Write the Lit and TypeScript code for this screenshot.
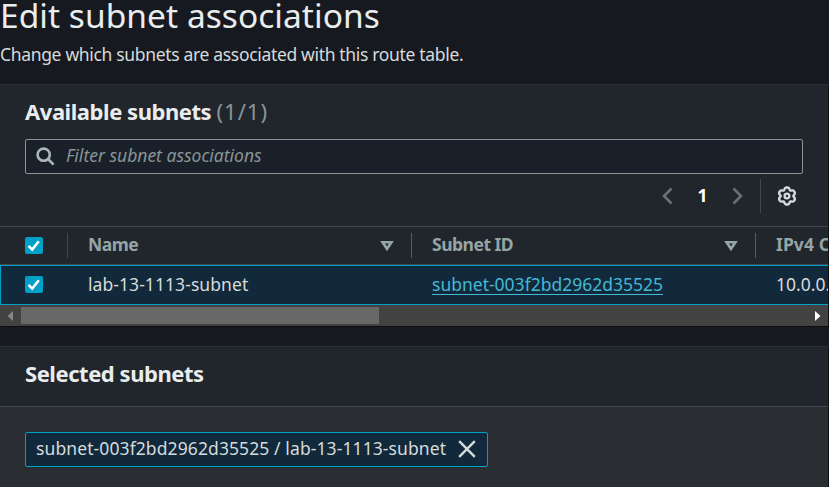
import { LitElement, html, css, svg } from "lit";
import { customElement } from "lit/decorators.js";

const check = html`<svg class="check" width="18" height="17" viewBox="0 0 18 17"><path d="M3.6 8.8 7.2 12.6 13.8 4.2" /></svg>`;
const sortIcon = html`<svg class="sort" width="14" height="12" viewBox="0 0 14 12"><path d="M2.6 2.2h8.8L7 8.8z" /></svg>`;

function gearPath(): string {
  const points: string[] = [];
  for (let i = 0; i <= 96; i++) {
    const a = (i / 96) * Math.PI * 2;
    const r = 7.7 + 1.1 * Math.cos(6 * a) - 0.25 * Math.cos(12 * a);
    points.push(`${(10 + r * Math.sin(a)).toFixed(2)} ${(10 - r * Math.cos(a)).toFixed(2)}`);
  }
  return `M${points.join("L")}Z`;
}

@customElement("app-root")
export class AppRoot extends LitElement {
  static styles = css`
    :host {
      display: flex;
      flex-direction: column;
      width: 829px;
      height: 487px;
      overflow: hidden;
      background: #16191f;
      color: #d5dbdb;
      font: 17.5px/24px "Noto Sans", "Open Sans", sans-serif;
      white-space: nowrap;
    }
    * { box-sizing: border-box; }
    svg { display: block; flex: none; fill: none; }
    h1, h2, p { margin: 0; }
    .head { height: 84px; flex: none; }
    h1 { font-size: 33.5px; line-height: 42px; margin-top: -6px; font-weight: 400; color: #eaeded; letter-spacing: 0.04px; }
    .sub { margin-top: 6px; letter-spacing: -0.33px; }
    .panel { flex: none; border-top: 1px solid #2a2e33; border-right: 1px solid #0d0f13; background: #21252c; }
    .available { height: 243px; border-bottom: 1px solid #0b0d10; display: flex; flex-direction: column; }
    h2 { font-size: 22px; line-height: 28px; font-weight: 700; color: #eaeded; padding-left: 25px; letter-spacing: -0.45px; }
    h2 .count { font-weight: 400; color: #879596; letter-spacing: 1px; }
    .available h2 { margin-top: 12px; }
    .search { margin: 14px 25px 0; height: 35px; flex: none; border: 1px solid #879596; border-radius: 2px; background: #1a2029; display: flex; align-items: center; padding-left: 10px; color: #879596; font-style: italic; }
    .search svg { margin-right: 11px; stroke: #aab7b8; stroke-width: 2.6; }
    .search span, .token span, .page, .cell span { margin-bottom: 3px; }
    .pager { height: 34px; margin: 5px 31px 13px 0; flex: none; display: flex; justify-content: flex-end; align-items: center; }
    .pager .arrow { stroke: #687078; stroke-width: 2.6; }
    .page { width: 59px; text-align: center; color: #fff; font-weight: 700; }
    .pager .divider { width: 1px; height: 34px; background: #414750; margin: 0 16px 0 17px; }
    .gear { stroke: #d5dbdb; stroke-width: 2.4; }
    .row { display: grid; grid-template-columns: 68px 344px 344px 72px; align-items: center; flex: none; overflow: hidden; }
    .header { height: 39px; border-top: 1px solid #414750; border-bottom: 1px solid #414750; color: #95a5a6; font-weight: 700; letter-spacing: -0.5px; }
    .cell { padding-left: 20px; display: flex; align-items: center; justify-content: space-between; overflow: hidden; }
    .header .cell { height: 25px; padding-right: 17px; border-right: 1px solid #545b64; }
    .header .cell:first-child { padding-left: 25px; border-right-color: #414750; }
    .header .cell:last-child { border: 0; padding-right: 0; letter-spacing: 0.1px; }
    .check { background: #00a1c9; border-radius: 2px; }
    .check path { stroke: #fff; stroke-width: 2.6; }
    .sort { stroke: #95a5a6; stroke-width: 2.6; }
    .data { height: 40px; border: 1px solid #00a1c9; border-right: 0; background: #12293b; grid-template-columns: 67px 344px 344px 73px; }
    .data .cell { height: 38px; }
    .data .cell:first-child { padding-left: 24px; }
    .data .check { margin-bottom: 1px; }
    .name { letter-spacing: 0.07px; }
    .link { color: #44b9d6; border-bottom: 1px solid #44b9d6; line-height: 22px; height: 22px; }
    .data .link { margin-bottom: 2px; }
    .scroll { height: 21px; flex: none; background: #424242; display: flex; align-items: center; justify-content: space-between; padding: 0 7px; }
    .thumb { height: 17px; width: 358px; background: #686868; margin: 0 auto 0 8px; }
    .selected { margin-top: 19px; height: 60px; }
    .selected h2 { margin-top: 12px; }
    .body { flex: none; height: 81px; border-top: 1px solid #414750; border-right: 1px solid #0d0f13; background: #2a2e33; padding: 25px 0 0 25px; }
    .token { width: 463px; height: 35px; border: 1px solid #00a1c9; border-radius: 2px; background: #12293b; display: flex; align-items: center; justify-content: space-between; padding: 0 11px 0 10px; }
    .token span { letter-spacing: 0.1px; margin-bottom: 4px; }
    .token svg { stroke: #d5dbdb; stroke-width: 2.4; margin-bottom: 1px; }
  `;

  render() {
    return html`
      <div class="head">
        <h1>Edit subnet associations</h1>
        <p class="sub">Change which subnets are associated with this route table.</p>
      </div>
      <section class="panel available">
        <h2>Available subnets <span class="count">(1/1)</span></h2>
        <div class="search">
          <svg width="19" height="19" viewBox="0 0 19 19"><circle cx="7.7" cy="7.7" r="6.1" /><path d="M12 12 17.6 17.6" /></svg>
          <span>Filter subnet associations</span>
        </div>
        <div class="pager">
          <svg class="arrow" width="11" height="18" viewBox="0 0 11 18"><path d="M9.5 1.5 2 9 9.5 16.5" /></svg>
          <span class="page">1</span>
          <svg class="arrow" width="11" height="18" viewBox="0 0 11 18"><path d="M1.5 1.5 9 9 1.5 16.5" /></svg>
          <span class="divider"></span>
          <svg class="gear" width="20" height="20" viewBox="0 0 20 20">${svg`<path d=${gearPath()} />`}<circle cx="10" cy="10" r="2.4" /></svg>
        </div>
        <div class="row header">
          <div class="cell">${check}</div>
          <div class="cell"><span>Name</span>${sortIcon}</div>
          <div class="cell"><span>Subnet ID</span>${sortIcon}</div>
          <div class="cell"><span>IPv4 CIDR</span></div>
        </div>
        <div class="row data">
          <div class="cell">${check}</div>
          <div class="cell"><span class="name">lab-13-1113-subnet</span></div>
          <div class="cell"><span class="link">subnet-003f2bd2962d35525</span></div>
          <div class="cell"><span>10.0.0.0/24</span></div>
        </div>
        <div class="scroll">
          <svg width="6" height="10" viewBox="0 0 6 10"><path d="M6 0v10L0.5 5z" fill="#868686" /></svg>
          <span class="thumb"></span>
          <svg width="6" height="10" viewBox="0 0 6 10"><path d="M0 0v10L5.5 5z" fill="#fff" /></svg>
        </div>
      </section>
      <section class="panel selected"><h2>Selected subnets</h2></section>
      <div class="body">
        <div class="token">
          <span>subnet-003f2bd2962d35525 / lab-13-1113-subnet</span>
          <svg width="18" height="18" viewBox="0 0 18 18"><path d="M1.2 1.2 16.8 16.8M16.8 1.2 1.2 16.8" /></svg>
        </div>
      </div>
    `;
  }
}
